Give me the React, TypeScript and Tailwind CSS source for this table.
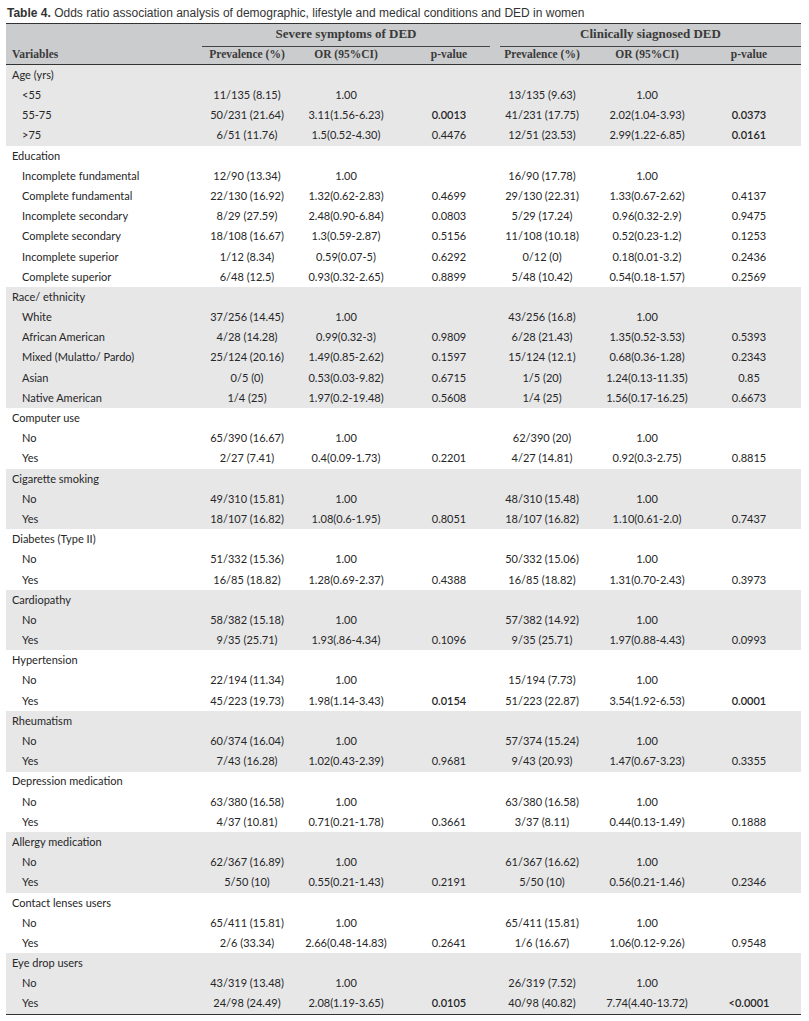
type Row = [string, string, string, string, string, string, string];

const groups: { name: string; rows: Row[] }[] = [
  {
    name: "Age (yrs)",
    rows: [
      ["<55", "11/135 (8.15)", "1.00", "", "13/135 (9.63)", "1.00", ""],
      ["55-75", "50/231 (21.64)", "3.11(1.56-6.23)", "0.0013", "41/231 (17.75)", "2.02(1.04-3.93)", "0.0373"],
      [">75", "6/51 (11.76)", "1.5(0.52-4.30)", "0.4476", "12/51 (23.53)", "2.99(1.22-6.85)", "0.0161"],
    ],
  },
  {
    name: "Education",
    rows: [
      ["Incomplete fundamental", "12/90 (13.34)", "1.00", "", "16/90 (17.78)", "1.00", ""],
      ["Complete fundamental", "22/130 (16.92)", "1.32(0.62-2.83)", "0.4699", "29/130 (22.31)", "1.33(0.67-2.62)", "0.4137"],
      ["Incomplete secondary", "8/29 (27.59)", "2.48(0.90-6.84)", "0.0803", "5/29 (17.24)", "0.96(0.32-2.9)", "0.9475"],
      ["Complete secondary", "18/108 (16.67)", "1.3(0.59-2.87)", "0.5156", "11/108 (10.18)", "0.52(0.23-1.2)", "0.1253"],
      ["Incomplete superior", "1/12 (8.34)", "0.59(0.07-5)", "0.6292", "0/12 (0)", "0.18(0.01-3.2)", "0.2436"],
      ["Complete superior", "6/48 (12.5)", "0.93(0.32-2.65)", "0.8899", "5/48 (10.42)", "0.54(0.18-1.57)", "0.2569"],
    ],
  },
  {
    name: "Race/ ethnicity",
    rows: [
      ["White", "37/256 (14.45)", "1.00", "", "43/256 (16.8)", "1.00", ""],
      ["African American", "4/28 (14.28)", "0.99(0.32-3)", "0.9809", "6/28 (21.43)", "1.35(0.52-3.53)", "0.5393"],
      ["Mixed (Mulatto/ Pardo)", "25/124 (20.16)", "1.49(0.85-2.62)", "0.1597", "15/124 (12.1)", "0.68(0.36-1.28)", "0.2343"],
      ["Asian", "0/5 (0)", "0.53(0.03-9.82)", "0.6715", "1/5 (20)", "1.24(0.13-11.35)", "0.85"],
      ["Native American", "1/4 (25)", "1.97(0.2-19.48)", "0.5608", "1/4 (25)", "1.56(0.17-16.25)", "0.6673"],
    ],
  },
  {
    name: "Computer use",
    rows: [
      ["No", "65/390 (16.67)", "1.00", "", "62/390 (20)", "1.00", ""],
      ["Yes", "2/27 (7.41)", "0.4(0.09-1.73)", "0.2201", "4/27 (14.81)", "0.92(0.3-2.75)", "0.8815"],
    ],
  },
  {
    name: "Cigarette smoking",
    rows: [
      ["No", "49/310 (15.81)", "1.00", "", "48/310 (15.48)", "1.00", ""],
      ["Yes", "18/107 (16.82)", "1.08(0.6-1.95)", "0.8051", "18/107 (16.82)", "1.10(0.61-2.0)", "0.7437"],
    ],
  },
  {
    name: "Diabetes (Type II)",
    rows: [
      ["No", "51/332 (15.36)", "1.00", "", "50/332 (15.06)", "1.00", ""],
      ["Yes", "16/85 (18.82)", "1.28(0.69-2.37)", "0.4388", "16/85 (18.82)", "1.31(0.70-2.43)", "0.3973"],
    ],
  },
  {
    name: "Cardiopathy",
    rows: [
      ["No", "58/382 (15.18)", "1.00", "", "57/382 (14.92)", "1.00", ""],
      ["Yes", "9/35 (25.71)", "1.93(.86-4.34)", "0.1096", "9/35 (25.71)", "1.97(0.88-4.43)", "0.0993"],
    ],
  },
  {
    name: "Hypertension",
    rows: [
      ["No", "22/194 (11.34)", "1.00", "", "15/194 (7.73)", "1.00", ""],
      ["Yes", "45/223 (19.73)", "1.98(1.14-3.43)", "0.0154", "51/223 (22.87)", "3.54(1.92-6.53)", "0.0001"],
    ],
  },
  {
    name: "Rheumatism",
    rows: [
      ["No", "60/374 (16.04)", "1.00", "", "57/374 (15.24)", "1.00", ""],
      ["Yes", "7/43 (16.28)", "1.02(0.43-2.39)", "0.9681", "9/43 (20.93)", "1.47(0.67-3.23)", "0.3355"],
    ],
  },
  {
    name: "Depression medication",
    rows: [
      ["No", "63/380 (16.58)", "1.00", "", "63/380 (16.58)", "1.00", ""],
      ["Yes", "4/37 (10.81)", "0.71(0.21-1.78)", "0.3661", "3/37 (8.11)", "0.44(0.13-1.49)", "0.1888"],
    ],
  },
  {
    name: "Allergy medication",
    rows: [
      ["No", "62/367 (16.89)", "1.00", "", "61/367 (16.62)", "1.00", ""],
      ["Yes", "5/50 (10)", "0.55(0.21-1.43)", "0.2191", "5/50 (10)", "0.56(0.21-1.46)", "0.2346"],
    ],
  },
  {
    name: "Contact lenses users",
    rows: [
      ["No", "65/411 (15.81)", "1.00", "", "65/411 (15.81)", "1.00", ""],
      ["Yes", "2/6 (33.34)", "2.66(0.48-14.83)", "0.2641", "1/6 (16.67)", "1.06(0.12-9.26)", "0.9548"],
    ],
  },
  {
    name: "Eye drop users",
    rows: [
      ["No", "43/319 (13.48)", "1.00", "", "26/319 (7.52)", "1.00", ""],
      ["Yes", "24/98 (24.49)", "2.08(1.19-3.65)", "0.0105", "40/98 (40.82)", "7.74(4.40-13.72)", "<0.0001"],
    ],
  },
];

const significant = ["0.0013", "0.0373", "0.0161", "0.0154", "0.0001", "0.0105", "<0.0001"];

const cols = "grid grid-cols-[196px_90px_108px_98px_88px_122px_82px_1fr]";

export default function App() {
  return (
    <div className="min-h-screen bg-white pl-[6px] pr-[8px] pt-[6px] font-['Lato',sans-serif] text-[#262626]">
      {/* Title */}
      <p className="h-[17px] pl-[1px] font-['Liberation_Sans',sans-serif] text-[12px] leading-[15px] text-[#333]">
        <span className="font-bold">Table 4.</span> Odds ratio association analysis of demographic, lifestyle and medical conditions and DED in women
      </p>

      {/* Header */}
      <div className="border-y-[1.5px] border-[#333] bg-[#cbcccd] font-['Liberation_Serif',serif] font-bold text-[#3a3a3a]">
        <div className={`${cols} h-[21px] items-end text-[13px]`}>
          <div />
          <div className="col-span-3 mr-[8px] border-b border-[#444] pb-[2px] text-center">Severe symptoms of DED</div>
          <div className="col-span-4 ml-[2px] border-b border-[#444] pb-[2px] text-center">Clinically siagnosed DED</div>
        </div>
        <div className={`${cols} h-[19px] items-center text-[11.5px]`}>
          <div className="pl-[6px]">Variables</div>
          <div className="text-center">Prevalence (%)</div>
          <div className="text-center">OR (95%CI)</div>
          <div className="text-center">p-value</div>
          <div className="text-center">Prevalence (%)</div>
          <div className="text-center">OR (95%CI)</div>
          <div className="text-center">p-value</div>
        </div>
      </div>

      {/* Body */}
      <div className="border-b-[1.5px] border-[#333] text-[11px]">
        {groups.map((group, gi) => (
          <div key={group.name} className={gi % 2 === 0 ? "bg-[#e7e7e8]" : "bg-white"}>
            <div className={`${cols} h-[20.2px] items-center`}>
              <div className="pl-[6px]">{group.name}</div>
            </div>
            {group.rows.map((row) => (
              <div key={row[0]} className={`${cols} h-[20.2px] items-center`}>
                <div className="pl-[16px]">{row[0]}</div>
                {row.slice(1).map((cell, ci) => (
                  <div key={ci} className={`text-center ${significant.includes(cell) && (ci === 2 || ci === 5) ? "font-semibold" : ""}`}>
                    {cell}
                  </div>
                ))}
              </div>
            ))}
          </div>
        ))}
      </div>
    </div>
  );
}
